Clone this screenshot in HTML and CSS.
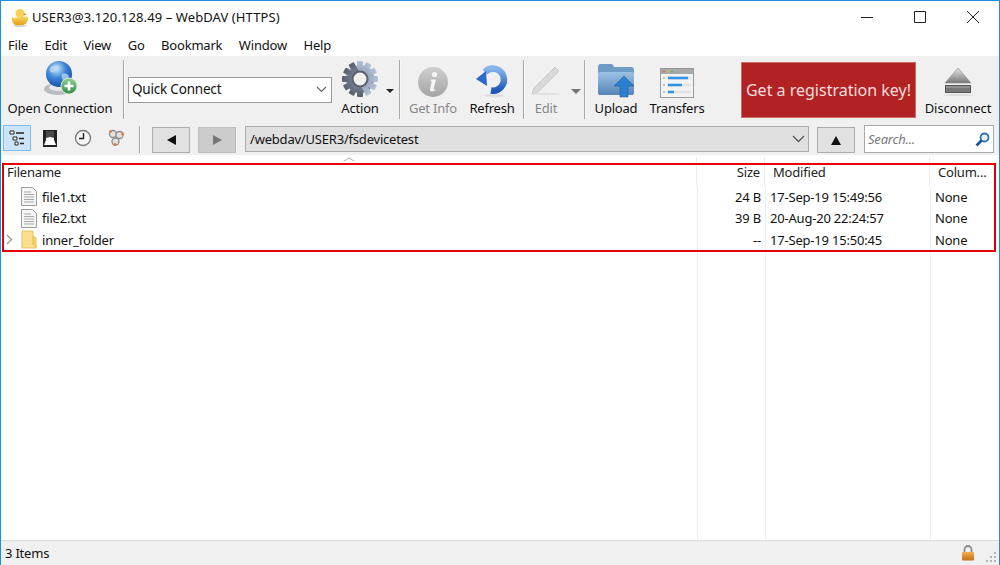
FILE: index.html
```html
<!DOCTYPE html>
<html lang="en">
<head>
  <meta charset="UTF-8" />
  <title>USER3@3.120.128.49 – WebDAV (HTTPS)</title>
  <meta name="viewport" content="width=device-width, initial-scale=1.0" />
  <link rel="stylesheet" href="styles.css">
</head>
<body>
  <div class="window">
    <!-- title bar -->
    <div class="titlebar">
      <svg class="duck" width="18" height="19" viewBox="0 0 18 19">
        <defs><linearGradient id="duckFill" x1="0" y1="0" x2="0" y2="1"><stop offset="0" stop-color="#fcd75e"/><stop offset="1" stop-color="#e29a14"/></linearGradient></defs>
        <path d="M1 9c1.500 1 3 1 5 .5l6-.5c2 0 4-1 5 0 .5 4-2 8-7 8.500H7C3 17.500.5 14 1 9z" fill="url(#duckFill)"/>
        <circle cx="9" cy="5.500" r="4.500" fill="#fbcf50"/>
        <path d="M12.500 5.500l3.500.5-3 1.500z" fill="#d9791a"/>
        <ellipse cx="9" cy="18" rx="7" ry="1" fill="#d8d2c0"/>
      </svg>
      <span class="title-text">USER3@3.120.128.49 – WebDAV (HTTPS)</span>
      <div class="win-btns">
        <svg width="12" height="12" viewBox="0 0 12 12"><path d="M0 6.500h12" stroke="#222" fill="none"/></svg>
        <svg width="12" height="12" viewBox="0 0 12 12"><path d="M.5.500h11v11H.5z" stroke="#222" fill="none"/></svg>
        <svg width="12" height="12" viewBox="0 0 12 12"><path d="M0 0l12 12M12 0L0 12" stroke="#222" fill="none"/></svg>
      </div>
    </div>

    <!-- menu -->
    <div class="menubar">
      <span>File</span><span>Edit</span><span>View</span><span>Go</span><span>Bookmark</span><span>Window</span><span>Help</span>
    </div>

    <!-- main toolbar -->
    <div class="toolbar">
      <div class="tool t-open">
        <svg class="ico" width="40" height="38" viewBox="0 0 40 38">
          <defs>
            <radialGradient id="globe" cx=".4" cy=".3" r=".8"><stop offset="0" stop-color="#cfe6fb"/><stop offset=".45" stop-color="#3b86d8"/><stop offset="1" stop-color="#123f9c"/></radialGradient>
            <linearGradient id="plus" x1="0" y1="0" x2="0" y2="1"><stop offset="0" stop-color="#8fd08f"/><stop offset="1" stop-color="#2f8f45"/></linearGradient>
          </defs>
          <ellipse cx="18" cy="29" rx="14" ry="6" fill="#b9bcc0"/>
          <ellipse cx="18" cy="27.500" rx="9" ry="3.500" fill="#e6e7e9"/>
          <circle cx="19" cy="14" r="13" fill="url(#globe)"/>
          <path d="M11 7c3-2 7-2 9 0-1 2-3 1-4 3s-3 3-5 2-2-3 0-5zM22 14c3-1 6 0 7 2-1 3-3 5-5 6-2-2-3-6-2-8z" fill="#bcd9f2" opacity=".75"/>
          <circle cx="29" cy="26" r="8" fill="url(#plus)" stroke="#d7e8d7"/>
          <path d="M29 21.500v9M24.500 26h9" stroke="#fff" stroke-width="2.600"/>
        </svg>
        <span>Open Connection</span>
      </div>
      <div class="sep s-open"></div>
      <div class="combo">
        <span>Quick Connect</span>
        <svg width="11" height="7" viewBox="0 0 11 7"><path d="M1 1l4.500 4.500L10 1" stroke="#666" stroke-width="1.200" fill="none"/></svg>
      </div>
      <div class="tool t-action">
        <svg class="ico" width="38" height="38" viewBox="0 0 38 38">
          <defs><linearGradient id="gear" x1="0" y1="0" x2="0" y2="1"><stop offset="0" stop-color="#b4c3da"/><stop offset="1" stop-color="#565f6d"/></linearGradient></defs>
          <g fill="url(#gear)">
            <circle cx="19" cy="19" r="14"/>
            <rect x="16" y="1" width="6" height="36" rx="1"/>
            <rect x="16" y="1" width="6" height="36" rx="1" transform="rotate(30 19 19)"/>
            <rect x="16" y="1" width="6" height="36" rx="1" transform="rotate(60 19 19)"/>
            <rect x="16" y="1" width="6" height="36" rx="1" transform="rotate(90 19 19)"/>
            <rect x="16" y="1" width="6" height="36" rx="1" transform="rotate(120 19 19)"/>
            <rect x="16" y="1" width="6" height="36" rx="1" transform="rotate(150 19 19)"/>
          </g>
          <circle cx="19" cy="19" r="7.500" fill="#f0f0f0" stroke="#59616e" stroke-width="2"/>
        </svg>
        <span>Action</span>
      </div>
      <i class="caret c-dark"></i>
      <div class="sep s-action"></div>
      <div class="tool t-info off">
        <svg class="ico" width="32" height="32" viewBox="0 0 32 32">
          <defs><linearGradient id="info" x1="0" y1="0" x2="0" y2="1"><stop offset="0" stop-color="#cfcfcf"/><stop offset="1" stop-color="#a4a4a4"/></linearGradient></defs>
          <circle cx="16" cy="16" r="15" fill="url(#info)"/>
          <circle cx="17.500" cy="8.500" r="2.600" fill="#f5f5f5"/>
          <path d="M14 13.500h5l-2.400 9.500c-.2.900.5 1 1.900.3l-.3 1.300c-2 1.100-5.800 1.500-5.200-1.400l1.800-7.800-1.200-.3z" fill="#f5f5f5"/>
        </svg>
        <span>Get Info</span>
      </div>
      <div class="tool t-refresh">
        <svg class="ico" width="36" height="36" viewBox="0 0 36 36">
          <defs><linearGradient id="rfr" x1="0" y1="0" x2="0" y2="1"><stop offset="0" stop-color="#86b6ec"/><stop offset="1" stop-color="#1d57b8"/></linearGradient></defs>
          <ellipse cx="20" cy="33.500" rx="10" ry="1.500" fill="#dcdcdc"/>
          <path d="M17 28.500A11 11 0 1 0 11 10" fill="none" stroke="url(#rfr)" stroke-width="6.500"/>
          <path d="M2 17l10-8 1 15z" fill="#2a69c8"/>
        </svg>
        <span>Refresh</span>
      </div>
      <div class="sep s-refresh"></div>
      <div class="tool t-edit off">
        <svg class="ico" width="32" height="34" viewBox="0 0 32 34">
          <path d="M25 3l4 4L8 28l-6 2 2-6z" fill="#d9d9d9" stroke="#c8c8c8"/>
          <ellipse cx="16" cy="30" rx="14" ry="1.200" fill="#e0e0e0"/>
        </svg>
        <span>Edit</span>
      </div>
      <i class="caret c-grey"></i>
      <div class="sep s-edit"></div>
      <div class="tool t-upload">
        <svg class="ico" width="38" height="36" viewBox="0 0 38 36">
          <defs><linearGradient id="fold" x1="0" y1="0" x2="0" y2="1"><stop offset="0" stop-color="#9cc2e4"/><stop offset="1" stop-color="#5586b6"/></linearGradient></defs>
          <path d="M1 5c0-2 1-3 3-3h10c2 0 2 1 3 3h17c2 0 3 1 3 3v22c0 2-1 3-3 3H4c-2 0-3-1-3-3z" fill="#6f9cc6"/>
          <path d="M1 12c0-1 1-2 2-2h32c1 0 2 1 2 2v19c0 1-1 2-2 2H3c-1 0-2-1-2-2z" fill="url(#fold)"/>
          <path d="M27 14l10 10h-6v11h-8V24h-6z" fill="#2c7fd0" stroke="#1d5e9f" stroke-width=".6"/>
        </svg>
        <span>Upload</span>
      </div>
      <div class="tool t-transfers">
        <svg class="ico" width="34" height="30" viewBox="0 0 34 30">
          <rect x=".5" y=".5" width="33" height="29" fill="#f3f3f3" stroke="#9a9a9a"/>
          <rect x="1" y="1" width="32" height="5" fill="#a8a8a8"/>
          <circle cx="4" cy="3.500" r="1" fill="#e8584e"/><circle cx="8" cy="3.500" r="1" fill="#eab23c"/><circle cx="12" cy="3.500" r="1" fill="#4dbb55"/>
          <path d="M7 10h24M7 17h24M7 24h24" stroke="#e4e4e4" stroke-width="3"/>
          <path d="M8 10h20M8 17h14M8 24h6" stroke="#2f93ea" stroke-width="2.600"/>
          <path d="M3 10h2M3 17h2M3 24h2" stroke="#b9c4cf" stroke-width="2"/>
        </svg>
        <span>Transfers</span>
      </div>
      <div class="regkey">Get a registration key!</div>
      <div class="tool t-disconnect">
        <svg class="ico" width="32" height="34" viewBox="0 0 32 34">
          <defs><linearGradient id="ej" x1="0" y1="0" x2="0" y2="1"><stop offset="0" stop-color="#e6e6e6"/><stop offset="1" stop-color="#787878"/></linearGradient></defs>
          <path d="M16 4l13 15H3z" fill="url(#ej)" stroke="#8a8a8a" stroke-width=".6"/>
          <rect x="3.500" y="21.500" width="25" height="7" fill="#777" stroke="#555"/>
          <path d="M4 23h24" stroke="#aaa"/>
          <ellipse cx="16" cy="31" rx="15" ry="1" fill="#dcdcdc"/>
        </svg>
        <span>Disconnect</span>
      </div>
    </div>

    <!-- navigation row -->
    <div class="navbar">
      <div class="view-btn active">
        <svg width="16" height="16" viewBox="0 0 16 16"><path d="M1 1h4v3H1zM4 7h4v3H4zM6 12h3v3H6z" fill="#fff" stroke="#222"/><path d="M7 3h8M10 8.500h5M11 13.500h4" stroke="#222" stroke-width="1.400"/></svg>
      </div>
      <div class="view-btn">
        <svg width="16" height="17" viewBox="0 0 16 17"><path d="M1 0h14v17H1z" fill="#222"/><path d="M4 1h8v9l2 5H2l2-5z" fill="#fff"/><path d="M4 1h8v7l-4-1-4 1z" fill="#4a4a4a"/></svg>
      </div>
      <div class="view-btn">
        <svg width="18" height="18" viewBox="0 0 18 18"><circle cx="9" cy="9" r="7.500" fill="#f7f7f7" stroke="#777" stroke-width="1.300"/><path d="M9.500 4v5.500H5" stroke="#222" stroke-width="1.400" fill="none"/></svg>
      </div>
      <div class="view-btn">
        <svg width="18" height="18" viewBox="0 0 18 18"><g fill="#e2e2e2" stroke="#8d8d8d" stroke-width="1.300"><circle cx="6" cy="5" r="3.500"/><circle cx="12.500" cy="6" r="3.500"/><circle cx="8.500" cy="12.500" r="3.500"/></g><circle cx="3.500" cy="2.500" r="1.300" fill="#e8762b"/><circle cx="15.500" cy="5" r="1.400" fill="#e8762b"/><circle cx="8" cy="15.500" r="1.500" fill="#e8762b"/></svg>
      </div>
      <div class="sep s-nav"></div>
      <div class="nav-btn b-back"><i class="tri-left"></i></div>
      <div class="nav-btn b-fwd off"><i class="tri-right"></i></div>
      <div class="path">
        <span>/webdav/USER3/fsdevicetest</span>
        <svg width="13" height="8" viewBox="0 0 13 8"><path d="M1 1l5.500 5.500L12 1" stroke="#555" stroke-width="1.300" fill="none"/></svg>
      </div>
      <div class="nav-btn b-up"><i class="tri-up"></i></div>
      <div class="search">
        <span>Search...</span>
        <svg width="15" height="15" viewBox="0 0 15 15"><circle cx="9.500" cy="5.500" r="4" fill="#eaf3fb" stroke="#2f6fb5" stroke-width="1.800"/><path d="M6.500 8.500L1.500 13.500" stroke="#1d4f95" stroke-width="2.600"/></svg>
      </div>
    </div>

    <!-- file browser -->
    <div class="browser">
      <div class="sort-mark"></div>
      <div class="row head">
        <div class="c-name">Filename</div>
        <div class="c-size">Size</div>
        <div class="c-mod">Modified</div>
        <div class="c-col">Colum...</div>
      </div>
      <div class="row item">
        <div class="c-name">
          <i class="arrow"></i>
          <svg width="16" height="19" viewBox="0 0 16 19"><path d="M.5.500h11l4 4v14H.5z" fill="#f6f6f6" stroke="#9b9b9b"/><path d="M3 5h7M3 7.500h10M3 10h10M3 12.500h10M3 15h10" stroke="#a8a8a8"/></svg>
          <span>file1.txt</span>
        </div>
        <div class="c-size">24 B</div>
        <div class="c-mod">17-Sep-19 15:49:56</div>
        <div class="c-col">None</div>
      </div>
      <div class="row item">
        <div class="c-name">
          <i class="arrow"></i>
          <svg width="16" height="19" viewBox="0 0 16 19"><path d="M.5.500h11l4 4v14H.5z" fill="#f6f6f6" stroke="#9b9b9b"/><path d="M3 5h7M3 7.500h10M3 10h10M3 12.500h10M3 15h10" stroke="#a8a8a8"/></svg>
          <span>file2.txt</span>
        </div>
        <div class="c-size">39 B</div>
        <div class="c-mod">20-Aug-20 22:24:57</div>
        <div class="c-col">None</div>
      </div>
      <div class="row item">
        <div class="c-name">
          <i class="arrow">
            <svg width="7" height="11" viewBox="0 0 7 11"><path d="M1 1l4.500 4.500L1 10" stroke="#999" stroke-width="1.300" fill="none"/></svg>
          </i>
          <svg width="16" height="19" viewBox="0 0 16 19"><path d="M1 1h11v14h3v3H1z" fill="#fbdf8e" stroke="#e7c35e"/><path d="M12 15V6l3 2v10" fill="#f5cf6b" stroke="#e7c35e"/></svg>
          <span>inner_folder</span>
        </div>
        <div class="c-size">--</div>
        <div class="c-mod">17-Sep-19 15:50:45</div>
        <div class="c-col">None</div>
      </div>
      <div class="redbox"></div>
    </div>

    <!-- status bar -->
    <div class="statusbar">
      <span>3 Items</span>
      <svg class="lock" width="14" height="16" viewBox="0 0 14 16">
        <defs><linearGradient id="lk" x1="0" y1="0" x2="0" y2="1"><stop offset="0" stop-color="#f2b04e"/><stop offset="1" stop-color="#c66f16"/></linearGradient></defs>
        <path d="M3.500 7V4.500a3.500 3.500 0 017 0V7" fill="none" stroke="#8b8b8b" stroke-width="1.800"/>
        <rect x="1" y="7" width="12" height="8.500" rx="1" fill="url(#lk)"/>
      </svg>
      <svg class="grip" width="12" height="12" viewBox="0 0 12 12"><path d="M9 1h2v2H9zM5 5h2v2H5zM9 5h2v2H9zM1 9h2v2H1zM5 9h2v2H5zM9 9h2v2H9z" fill="#b5b5b5"/></svg>
    </div>
  </div>
</body>
</html>
```

FILE: styles.css
```css
html, body {
  margin: 0;
  height: 100%;
}
body {
  font-family: "Noto Sans", "Open Sans", sans-serif;
  font-size: 13px;
  color: #111;
  background: #fff;
}
.window {
  position: relative;
  box-sizing: border-box;
  height: 565px;
  display: flex;
  flex-direction: column;
  border: 1px solid #1a8fe0;
  border-bottom: none;
  overflow: hidden;
}

/* title bar */
.titlebar {
  height: 32px;
  display: flex;
  align-items: center;
  flex: none;
}
.duck {
  margin-left: 10px;
}
.title-text {
  margin-left: 3px;
  letter-spacing: 0.1px;
}
.win-btns {
  margin-left: auto;
  display: flex;
  gap: 41px;
  margin-right: 20px;
}

/* menu */
.menubar {
  height: 23px;
  flex: none;
  display: flex;
  align-items: center;
  padding-left: 7px;
  gap: 16.500px;
  letter-spacing: -0.2px;
}

/* main toolbar */
.toolbar {
  height: 64px;
  flex: none;
  display: flex;
  background: #f0f0f0;
  align-items: stretch;
}
.tool {
  flex: none;
  display: flex;
  flex-direction: column;
  align-items: center;
  justify-content: flex-end;
  padding-bottom: 3px;
  letter-spacing: -0.2px;
  white-space: nowrap;
}
.tool .ico {
  margin-bottom: 1px;
}
.tool.off {
  color: #888;
}
.t-open { width: 118px; letter-spacing: -0.1px; }
.t-action { width: 50px; margin-left: 3px; }
.t-info { width: 64px; }
.t-refresh { width: 54px; }
.t-edit { width: 42px; }
.t-upload { width: 60px; }
.t-transfers { width: 62px; }
.t-disconnect { width: 84px; letter-spacing: -0.1px; }

.sep {
  flex: none;
  width: 1px;
  background: #a8a8a8;
  border-right: 1px solid #f8f8f8;
  margin: 4px 4px 0;
  height: 59px;
}
.s-open { margin-right: 3px; }
.s-action { margin-left: 5px; margin-right: 0; }
.s-refresh { margin-left: 4px; margin-right: 0; }
.s-edit { margin-left: 3px; margin-right: 0; }
.s-nav {
  margin: 6px 11px 0 4px;
  height: 27px;
}

.combo {
  flex: none;
  box-sizing: border-box;
  width: 204px;
  height: 26px;
  margin-top: 21px;
  background: #fff;
  border: 1px solid #9a9a9a;
  display: flex;
  align-items: center;
  justify-content: space-between;
  padding: 0 4px 2px 3px;
  font-size: 13.500px;
  letter-spacing: -0.2px;
}
.caret {
  flex: none;
  width: 0;
  height: 0;
  margin-top: 33px;
  margin-left: 1px;
  align-self: flex-start;
  border-left: 4px solid transparent;
  border-right: 4px solid transparent;
  border-top: 4px solid #222;
}
.caret.c-grey {
  border-left-width: 5px;
  border-right-width: 5px;
  border-top: 5px solid #777;
  margin-left: 4px;
}
.regkey {
  flex: none;
  box-sizing: border-box;
  width: 175px;
  height: 56px;
  margin: 6px 0 0 33px;
  background: #b22222;
  border: 1px solid #d06a6a;
  color: #f6dede;
  font-size: 16px;
  display: flex;
  align-items: center;
  justify-content: center;
  white-space: nowrap;
}

/* nav row */
.navbar {
  height: 35px;
  flex: none;
  box-sizing: border-box;
  background: #f0f0f0;
  display: flex;
  align-items: flex-start;
  padding-left: 2px;
}
.view-btn {
  flex: none;
  box-sizing: border-box;
  width: 28px;
  height: 26px;
  margin: 5px 5px 0 0;
  display: flex;
  align-items: center;
  justify-content: center;
  border: 1px solid transparent;
}
.view-btn.active {
  background: #cce4f7;
  border-color: #7fbdf0;
}
.nav-btn {
  flex: none;
  box-sizing: border-box;
  height: 26px;
  margin-top: 7px;
  background: #e1e1e1;
  border: 1px solid #adadad;
  display: flex;
  align-items: center;
  justify-content: center;
}
.nav-btn.off {
  background: #cccccc;
  border-color: #bfbfbf;
}
.b-back { width: 38px; }
.b-fwd { width: 38px; margin-left: 8px; }
.b-up { width: 38px; margin-left: 8px; }
.tri-left {
  border-top: 5px solid transparent;
  border-bottom: 5px solid transparent;
  border-right: 9px solid #111;
}
.tri-right {
  border-top: 5px solid transparent;
  border-bottom: 5px solid transparent;
  border-left: 9px solid #777;
}
.tri-up {
  border-left: 5px solid transparent;
  border-right: 5px solid transparent;
  border-bottom: 9px solid #111;
}
.path {
  flex: none;
  box-sizing: border-box;
  width: 564px;
  height: 26px;
  margin: 6px 0 0 9px;
  background: #e0e0e0;
  border: 1px solid #acacac;
  display: flex;
  align-items: center;
  justify-content: space-between;
  padding: 0 3px 0 4px;
  letter-spacing: -0.2px;
}
.search {
  flex: none;
  box-sizing: border-box;
  width: 130px;
  height: 28px;
  margin: 5px 0 0 9px;
  background: #fff;
  border: 1px solid #a9a9a9;
  display: flex;
  align-items: center;
  justify-content: space-between;
  padding: 0 3px 0 3px;
  color: #7a7a7a;
  font-style: italic;
  letter-spacing: -0.2px;
}

/* file list */
.browser {
  position: relative;
  flex: 1;
  background:
    linear-gradient(#e6f1fa, #e6f1fa) 696px 0 / 1px 100% no-repeat,
    linear-gradient(#e6f1fa, #e6f1fa) 764px 0 / 1px 100% no-repeat,
    linear-gradient(#e6f1fa, #e6f1fa) 929px 0 / 1px 100% no-repeat,
    #fff;
}
.row {
  display: grid;
  grid-template-columns: 696px 68px 165px 1fr;
  align-items: center;
}
.head {
  height: 31px;
  box-sizing: border-box;
  padding-top: 2px;
  background: #fff;
  color: #222;
  letter-spacing: -0.2px;
}
.head > div {
  align-self: stretch;
  display: flex;
  align-items: center;
  border-right: 1px solid #ececec;
}
.item {
  height: 21.500px;
  letter-spacing: -0.2px;
}
.c-name {
  display: flex;
  align-items: center;
  padding-left: 6px;
}
.head .c-name { padding-left: 6px; }
.c-size {
  text-align: right;
  padding-right: 4px;
}
.head .c-size {
  justify-content: flex-end;
  padding-right: 4px;
}
.head .c-mod { padding-left: 8px; }
.head .c-col { padding-left: 8px; border-right: none; }
.c-mod { padding-left: 5px; }
.c-col { padding-left: 5px; }
.arrow {
  width: 15px;
  display: flex;
  align-items: center;
  flex: none;
  margin-left: -1px;
}
.c-name svg + span { margin-left: 5px; }
.sort-mark {
  position: absolute;
  top: 2px;
  left: 344px;
  width: 7px;
  height: 7px;
  border-left: 1px solid #aaa;
  border-top: 1px solid #aaa;
  transform: scaleY(.6) rotate(45deg);
}
.redbox {
  position: absolute;
  left: 1px;
  top: 8px;
  width: 990px;
  height: 85px;
  border: 2px solid #e60000;
  pointer-events: none;
}

/* status bar */
.statusbar {
  height: 24px;
  flex: none;
  background: #f0f0f0;
  border-top: 1px solid #dcdcdc;
  display: flex;
  align-items: center;
  padding-left: 4px;
  letter-spacing: -0.2px;
}
.lock {
  margin-left: auto;
}
.grip {
  margin: 8px 2px 0 10px;
}
```
